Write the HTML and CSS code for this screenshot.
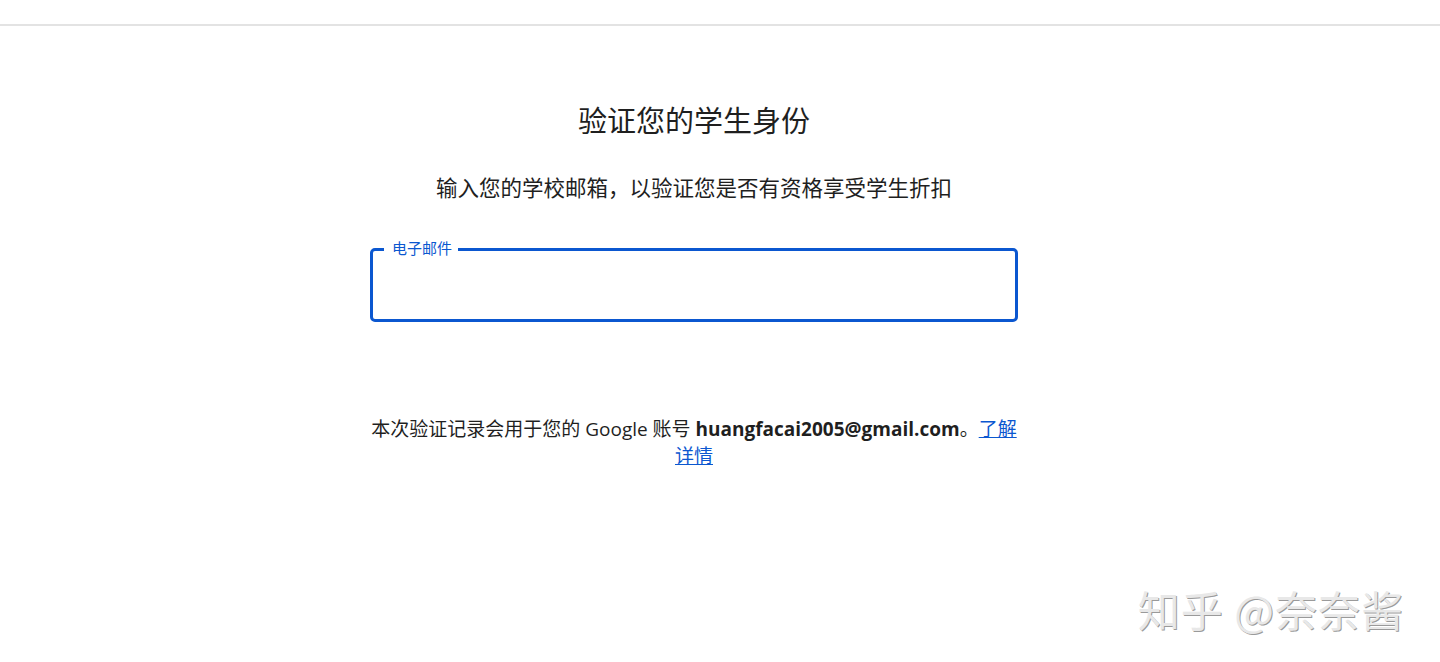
FILE: index.html
```html
<!DOCTYPE html>
<html>
<head>
  <title>验证您的学生身份</title>
  <meta name="viewport" content="width=device-width, initial-scale=1">
  <link rel="stylesheet" href="styles.css">
</head>
<body>
  <div class="topbar"></div>

  <div class="page">
    <div class="container">
      <h1>验证您的学生身份</h1>
      <p class="subtitle">输入您的学校邮箱，以验证您是否有资格享受学生折扣</p>

      <div class="field">
        <label for="email">电子邮件</label>
        <input type="email" id="email">
      </div>

      <p class="notice">本次验证记录会用于您的 Google 账号 <b>huangfacai2005@gmail.com</b>。<a href="#">了解详情</a></p>
    </div>
  </div>

  <div class="watermark">知乎 @奈奈酱</div>
</body>
</html>
```

FILE: styles.css
```css
body {
  font-family: Roboto, "Noto Sans CJK SC", sans-serif;
  background: #fff;
  color: #1f1f1f;
  margin: 0;
  height: 662px;
  overflow: hidden;
}

.topbar {
  height: 24px;
  border-bottom: 2px solid #e3e3e3;
}

.page {
  display: flex;
  justify-content: center;
  padding-right: 52px;
}

.container {
  width: 648px;
  text-align: center;
}

h1 {
  font-size: 29px;
  font-weight: 400;
  margin: 76px 0 0;
  line-height: 40px;
}

.subtitle {
  font-size: 21.5px;
  margin: 32px 0 0;
  line-height: 30px;
}

.field {
  margin: 44px 0 0;
  box-sizing: border-box;
  height: 74px;
  border: 3px solid #0b57d0;
  border-radius: 5px;
  padding: 12px 16px 0;
  text-align: left;
  position: relative;
}

.field label {
  position: absolute;
  left: 11px;
  top: -12px;
  font-size: 15px;
  line-height: 20px;
  color: #0b57d0;
  background: #fff;
  padding: 0 6px 0 8px;
}

.field input {
  border: none;
  outline: none;
  width: 100%;
  height: 44px;
  font-size: 18px;
  font-family: inherit;
  background: transparent;
}

.notice {
  font-family: "Open Sans", "Noto Sans CJK SC", sans-serif;
  font-size: 19px;
  line-height: 27px;
  margin: 94px 0 0;
}

.notice b {
  font-weight: 700;
}

.notice a {
  color: #0b57d0;
}

.watermark {
  position: absolute;
  right: 36px;
  top: 578px;
  font-size: 42px;
  font-family: "Noto Sans CJK SC", sans-serif;
  color: #e8e8e8;
  text-shadow: 1px 1px 0 #9a9a9a;
  letter-spacing: 1px;
}
```
